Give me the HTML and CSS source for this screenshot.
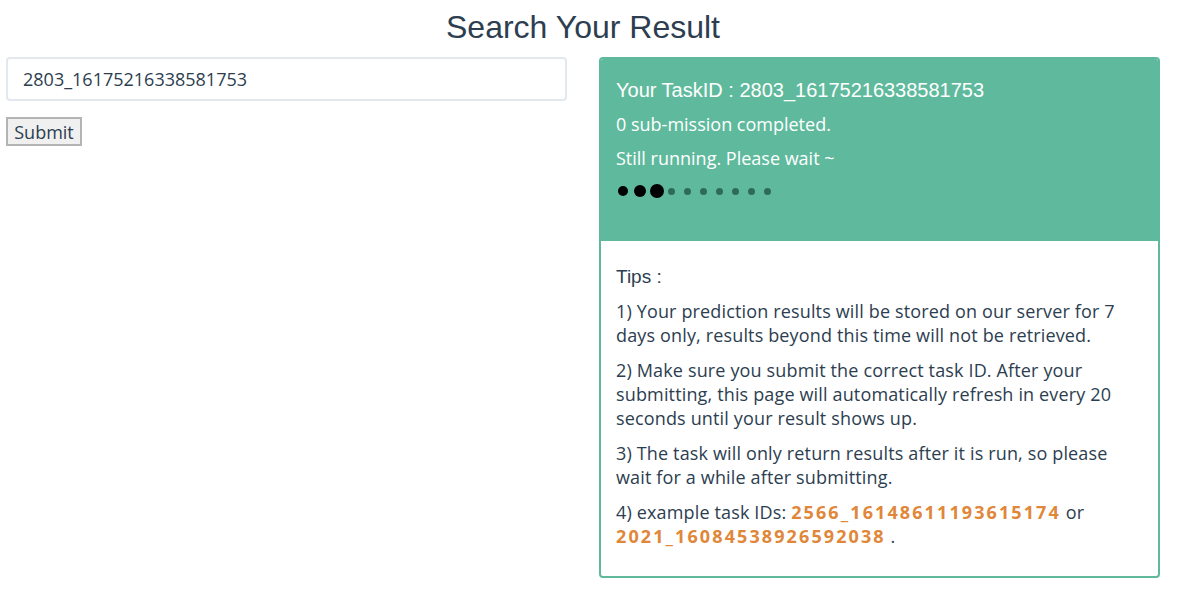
FILE: index.html
```html
<!DOCTYPE html>
<html>
<head>
<meta charset="utf-8">
<link rel="stylesheet" href="styles.css">
</head>
<body>
<div class="page">
  <h1 class="title">Search Your Result</h1>
  <div class="row">
    <div class="col">
      <input class="task-input" type="text" value="2803_16175216338581753">
      <button class="submit-btn">Submit</button>
    </div>
    <div class="col">
      <div class="panel">
        <div class="panel-head">
          <div class="task-id">Your TaskID : 2803_16175216338581753</div>
          <p class="status">0 sub-mission completed.</p>
          <p class="status">Still running. Please wait ~</p>
          <div class="dots">
            <span class="dot big d1"></span>
            <span class="dot big d2"></span>
            <span class="dot big d3"></span>
            <span class="dot small"></span>
            <span class="dot small"></span>
            <span class="dot small"></span>
            <span class="dot small"></span>
            <span class="dot small"></span>
            <span class="dot small"></span>
            <span class="dot small"></span>
          </div>
        </div>
        <div class="panel-body">
          <div class="tips-title">Tips :</div>
          <p class="tip">1) Your prediction results will be stored on our server for 7 days only, results beyond this time will not be retrieved.</p>
          <p class="tip">2) Make sure you submit the correct task ID. After your submitting, this page will automatically refresh in every 20 seconds until your result shows up.</p>
          <p class="tip">3) The task will only return results after it is run, so please wait for a while after submitting.</p>
          <p class="tip">4) example task IDs: <b class="tid">2566_16148611193615174</b> or <b class="tid">2021_16084538926592038</b> .</p>
        </div>
      </div>
    </div>
  </div>
</div>
</body>
</html>
```
FILE: styles.css
```css
* { box-sizing: border-box; }
body {
  margin: 0;
  background: #fff;
  color: #2c3e50;
  font-family: "Open Sans", "Liberation Sans", sans-serif;
  font-size: 16px;
}
.page {
  width: 1154px;
  margin-left: 6px;
}
.title {
  margin: 0;
  padding-top: 8px;
  height: 57px;
  text-align: center;
  font-family: "Liberation Sans", Arial, sans-serif;
  font-weight: normal;
  font-size: 32px;
  line-height: 38px;
  color: #2c3e50;
}
.row {
  display: flex;
  gap: 32px;
}
.col {
  flex: 1;
  display: flex;
  flex-direction: column;
  align-items: flex-start;
}
.task-input {
  width: 100%;
  height: 44px;
  border: 2px solid #e3e8ee;
  border-radius: 4px;
  padding: 0 15px;
  font-family: "Open Sans", sans-serif;
  font-size: 18px;
  color: #2c3e50;
  outline: none;
}
.submit-btn {
  margin-top: 16px;
  width: 76px;
  height: 29px;
  padding: 0;
  border: 2px solid #b4b4b4;
  background: #f0f0f0;
  font-family: "Open Sans", sans-serif;
  font-size: 18px;
  line-height: 24px;
  color: #2c3e50;
  border-radius: 0;
}
.panel {
  width: 100%;
  border: 2px solid #5fba9d;
  border-radius: 4px;
  overflow: hidden;
}
.panel-head {
  background: #5fba9d;
  color: #fff;
  padding: 19px 15px 39px;
}
.task-id {
  font-family: "Liberation Sans", Arial, sans-serif;
  font-size: 20px;
  line-height: 24px;
  margin-bottom: 10px;
}
.status {
  margin: 0 0 10px;
  font-size: 18px;
  line-height: 24px;
}
.dots {
  display: flex;
  align-items: center;
  height: 22px;
  padding-left: 2px;
}
.dot {
  display: block;
  border-radius: 50%;
}
.dot.big { background: #000; }
.dot.d1 { width: 10px; height: 10px; margin-right: 6px; }
.dot.d2 { width: 12px; height: 12px; margin-right: 4px; }
.dot.d3 { width: 14px; height: 14px; margin-right: 4px; }
.dot.small {
  width: 7px;
  height: 7px;
  background: #2e6b56;
  margin-right: 9px;
}
.panel-body {
  padding: 24px 15px 17px;
}
.tips-title {
  font-family: "Liberation Sans", Arial, sans-serif;
  font-size: 19px;
  line-height: 24px;
  margin-bottom: 10px;
}
.tip {
  margin: 0 0 11px;
  font-size: 18px;
  line-height: 24px;
  letter-spacing: 0.15px;
}
.tid {
  color: #e0873a;
  font-weight: bold;
  font-size: 18px;
  letter-spacing: 2.1px;
}
```
